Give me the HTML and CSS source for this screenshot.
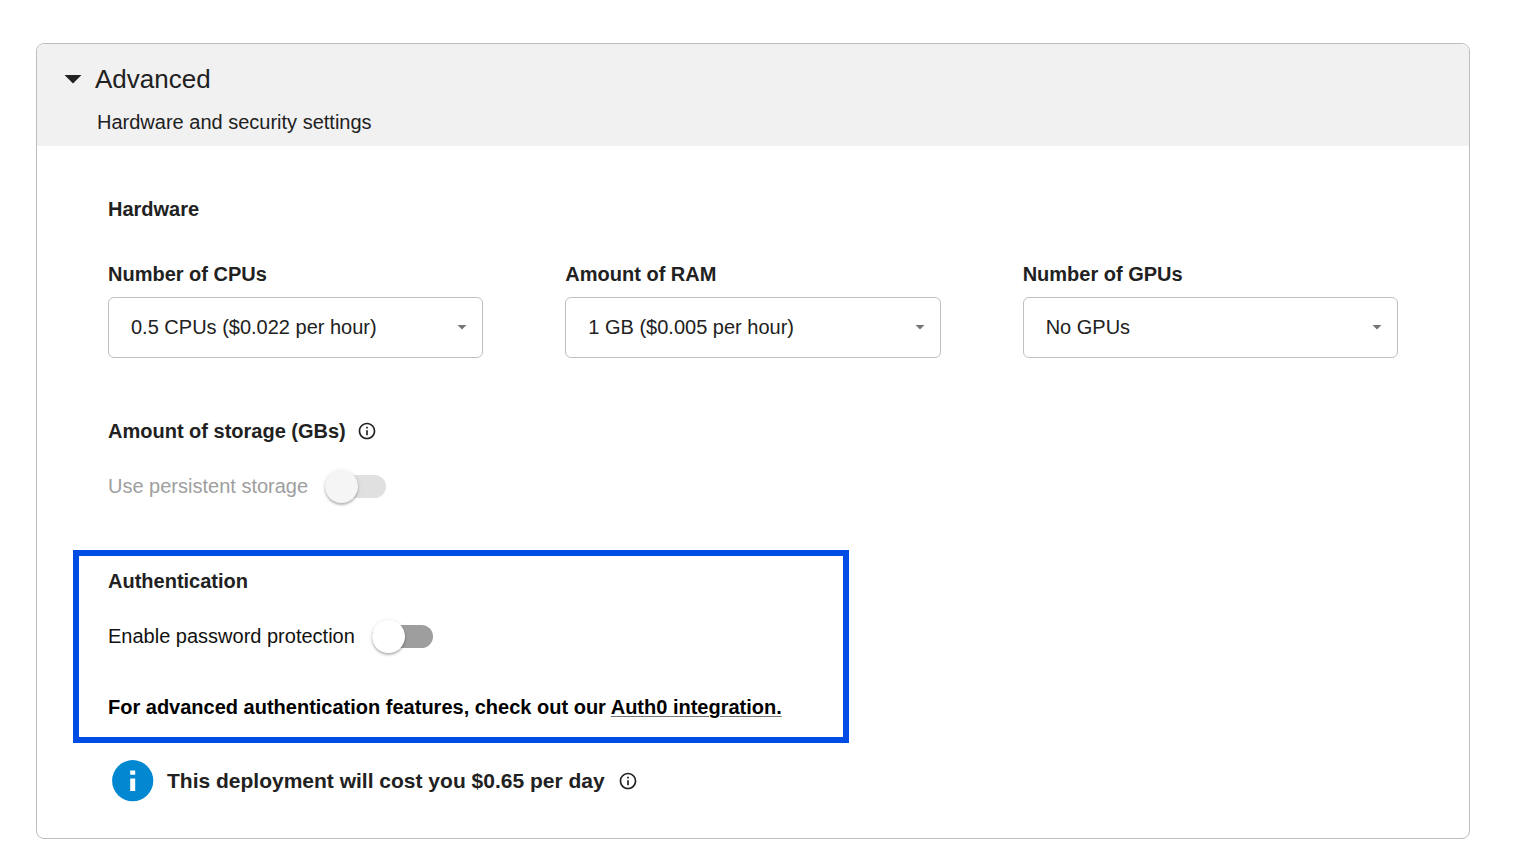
FILE: index.html
```html
<!DOCTYPE html>
<html lang="en">
<head>
<meta charset="utf-8">
<meta name="viewport" content="width=device-width, initial-scale=1">
<title>Advanced settings</title>
<link rel="stylesheet" href="styles.css">
</head>
<body>
<main class="card">
  <header class="card-header">
    <h1 class="card-title">
      <button class="toggle" type="button" aria-expanded="true" aria-controls="settings">
        <svg class="caret" viewBox="0 0 18 10" aria-hidden="true"><path d="M0.500 1h17L9 9.500z"/></svg>
        <span>Advanced</span>
      </button>
    </h1>
    <p class="subtitle">Hardware and security settings</p>
  </header>

  <div class="card-body" id="settings">
    <section>
      <h2 class="heading">Hardware</h2>
      <div class="fields">
        <div class="field">
          <label class="heading" for="cpus">Number of CPUs</label>
          <div class="select-wrap">
            <select id="cpus" class="select"><option>0.5 CPUs ($0.022 per hour)</option></select>
            <svg class="arrow" viewBox="0 0 10 5" aria-hidden="true"><path d="M0.500 0h9L5 4.500z"/></svg>
          </div>
        </div>
        <div class="field">
          <label class="heading" for="ram">Amount of RAM</label>
          <div class="select-wrap">
            <select id="ram" class="select"><option>1 GB ($0.005 per hour)</option></select>
            <svg class="arrow" viewBox="0 0 10 5" aria-hidden="true"><path d="M0.500 0h9L5 4.500z"/></svg>
          </div>
        </div>
        <div class="field">
          <label class="heading" for="gpus">Number of GPUs</label>
          <div class="select-wrap">
            <select id="gpus" class="select"><option>No GPUs</option></select>
            <svg class="arrow" viewBox="0 0 10 5" aria-hidden="true"><path d="M0.500 0h9L5 4.500z"/></svg>
          </div>
        </div>
      </div>
    </section>

    <section class="storage">
      <h2 class="heading with-icon">
        <span>Amount of storage (GBs)</span>
        <svg class="info" viewBox="0 0 24 24" aria-hidden="true"><path d="M11 7h2v2h-2zm0 4h2v6h-2zm1-9C6.480 2 2 6.480 2 12s4.480 10 10 10 10-4.480 10-10S17.520 2 12 2zm0 18c-4.410 0-8-3.590-8-8s3.590-8 8-8 8 3.590 8 8-3.590 8-8 8z"/></svg>
      </h2>
      <label class="switch-row is-disabled">
        <span>Use persistent storage</span>
        <input class="switch" type="checkbox" role="switch" disabled>
      </label>
    </section>

    <section class="auth">
      <h2 class="heading">Authentication</h2>
      <label class="switch-row">
        <span>Enable password protection</span>
        <input class="switch" type="checkbox" role="switch">
      </label>
      <p class="auth-note">For advanced authentication features, check out our <a class="link" href="#auth0">Auth0 integration.</a></p>
    </section>

    <div class="cost">
      <svg class="badge" viewBox="0 0 42 42" aria-hidden="true"><circle cx="20.700" cy="20.700" r="20.600" fill="#0288d1"/><path fill="#fff" d="M18.200 10.500h5v4.200h-5zM18.200 18.500h5v12.500h-5z"/></svg>
      <p class="cost-text">This deployment will cost you $0.65 per day</p>
      <svg class="info" viewBox="0 0 24 24" aria-hidden="true"><path d="M11 7h2v2h-2zm0 4h2v6h-2zm1-9C6.480 2 2 6.480 2 12s4.480 10 10 10 10-4.480 10-10S17.520 2 12 2zm0 18c-4.410 0-8-3.590-8-8s3.590-8 8-8 8 3.590 8 8-3.590 8-8 8z"/></svg>
    </div>
  </div>
</main>
</body>
</html>
```
FILE: styles.css
```css
* {
  box-sizing: border-box;
}

body {
  margin: 0;
  padding: 43px 58px 24px 36px;
  background: #fff;
  color: #212121;
  font: 20px/24px "Liberation Sans", Arial, sans-serif;
}

h1, h2, p {
  margin: 0;
}

.card {
  border: 1px solid #bdbdbd;
  border-radius: 8px;
  overflow: hidden;
}

.card-header {
  padding: 19px 27px 12px;
  background: #f1f1f1;
}

.card-title {
  font-size: 26px;
  font-weight: 400;
  line-height: 32px;
}

.toggle {
  display: flex;
  align-items: center;
  gap: 13px;
  padding: 0;
  border: 0;
  background: none;
  color: inherit;
  font: inherit;
  cursor: pointer;
}

.caret {
  width: 18px;
  height: 10px;
  fill: #212121;
}

.subtitle {
  margin-top: 15px;
  padding-left: 33px;
}

.card-body {
  padding: 51px 71px 36px;
}

.heading {
  font-size: 20px;
  font-weight: 700;
}

.fields {
  display: grid;
  grid-template-columns: repeat(3, 1fr);
  gap: 82px;
  margin-top: 41px;
}

.field {
  display: flex;
  flex-direction: column;
  gap: 11px;
}

.select-wrap {
  position: relative;
}

.select {
  width: 100%;
  height: 61px;
  padding: 0 40px 2px 22px;
  border: 1px solid #c0c0c0;
  border-radius: 6px;
  background: #fff;
  color: inherit;
  font: inherit;
  appearance: none;
}

.arrow {
  position: absolute;
  top: 28px;
  right: 16px;
  width: 10px;
  height: 5px;
  fill: #757575;
  pointer-events: none;
}

.storage {
  margin-top: 61px;
}

.with-icon {
  display: flex;
  align-items: center;
  gap: 11px;
}

.info {
  width: 20px;
  height: 20px;
  fill: #212121;
}

.switch-row {
  display: flex;
  align-items: center;
  gap: 17px;
  width: fit-content;
  height: 34px;
  margin-top: 26px;
  color: #111;
}

.is-disabled {
  color: #9e9e9e;
}

.switch {
  display: flex;
  align-items: center;
  width: 61px;
  height: 23px;
  margin: 0;
  border-radius: 12px;
  background: #9e9e9e;
  appearance: none;
}

.switch::before {
  content: "";
  width: 33px;
  height: 33px;
  border-radius: 50%;
  background: #fff;
  box-shadow: 0 2px 2px rgba(0, 0, 0, 0.2), 0 1px 4px rgba(0, 0, 0, 0.14);
}

.switch:checked {
  justify-content: flex-end;
}

.switch:disabled {
  background: #e0e0e0;
}

.switch:disabled::before {
  background: #f5f5f5;
}

.auth {
  max-width: 776px;
  margin: 47px 0 0 -35px;
  padding: 13px 29px 18px;
  border: 6px solid #004de6;
}

.auth-note {
  margin-top: 42px;
  color: #000;
  font-weight: 700;
}

.link {
  color: inherit;
  text-decoration: underline 1px #777;
  text-underline-offset: 2px;
}

.cost {
  display: flex;
  align-items: center;
  gap: 13px;
  margin-top: 17px;
  padding-left: 4px;
}

.badge {
  width: 42px;
  height: 42px;
}

.cost-text {
  font-size: 21px;
  font-weight: 700;
}
```
